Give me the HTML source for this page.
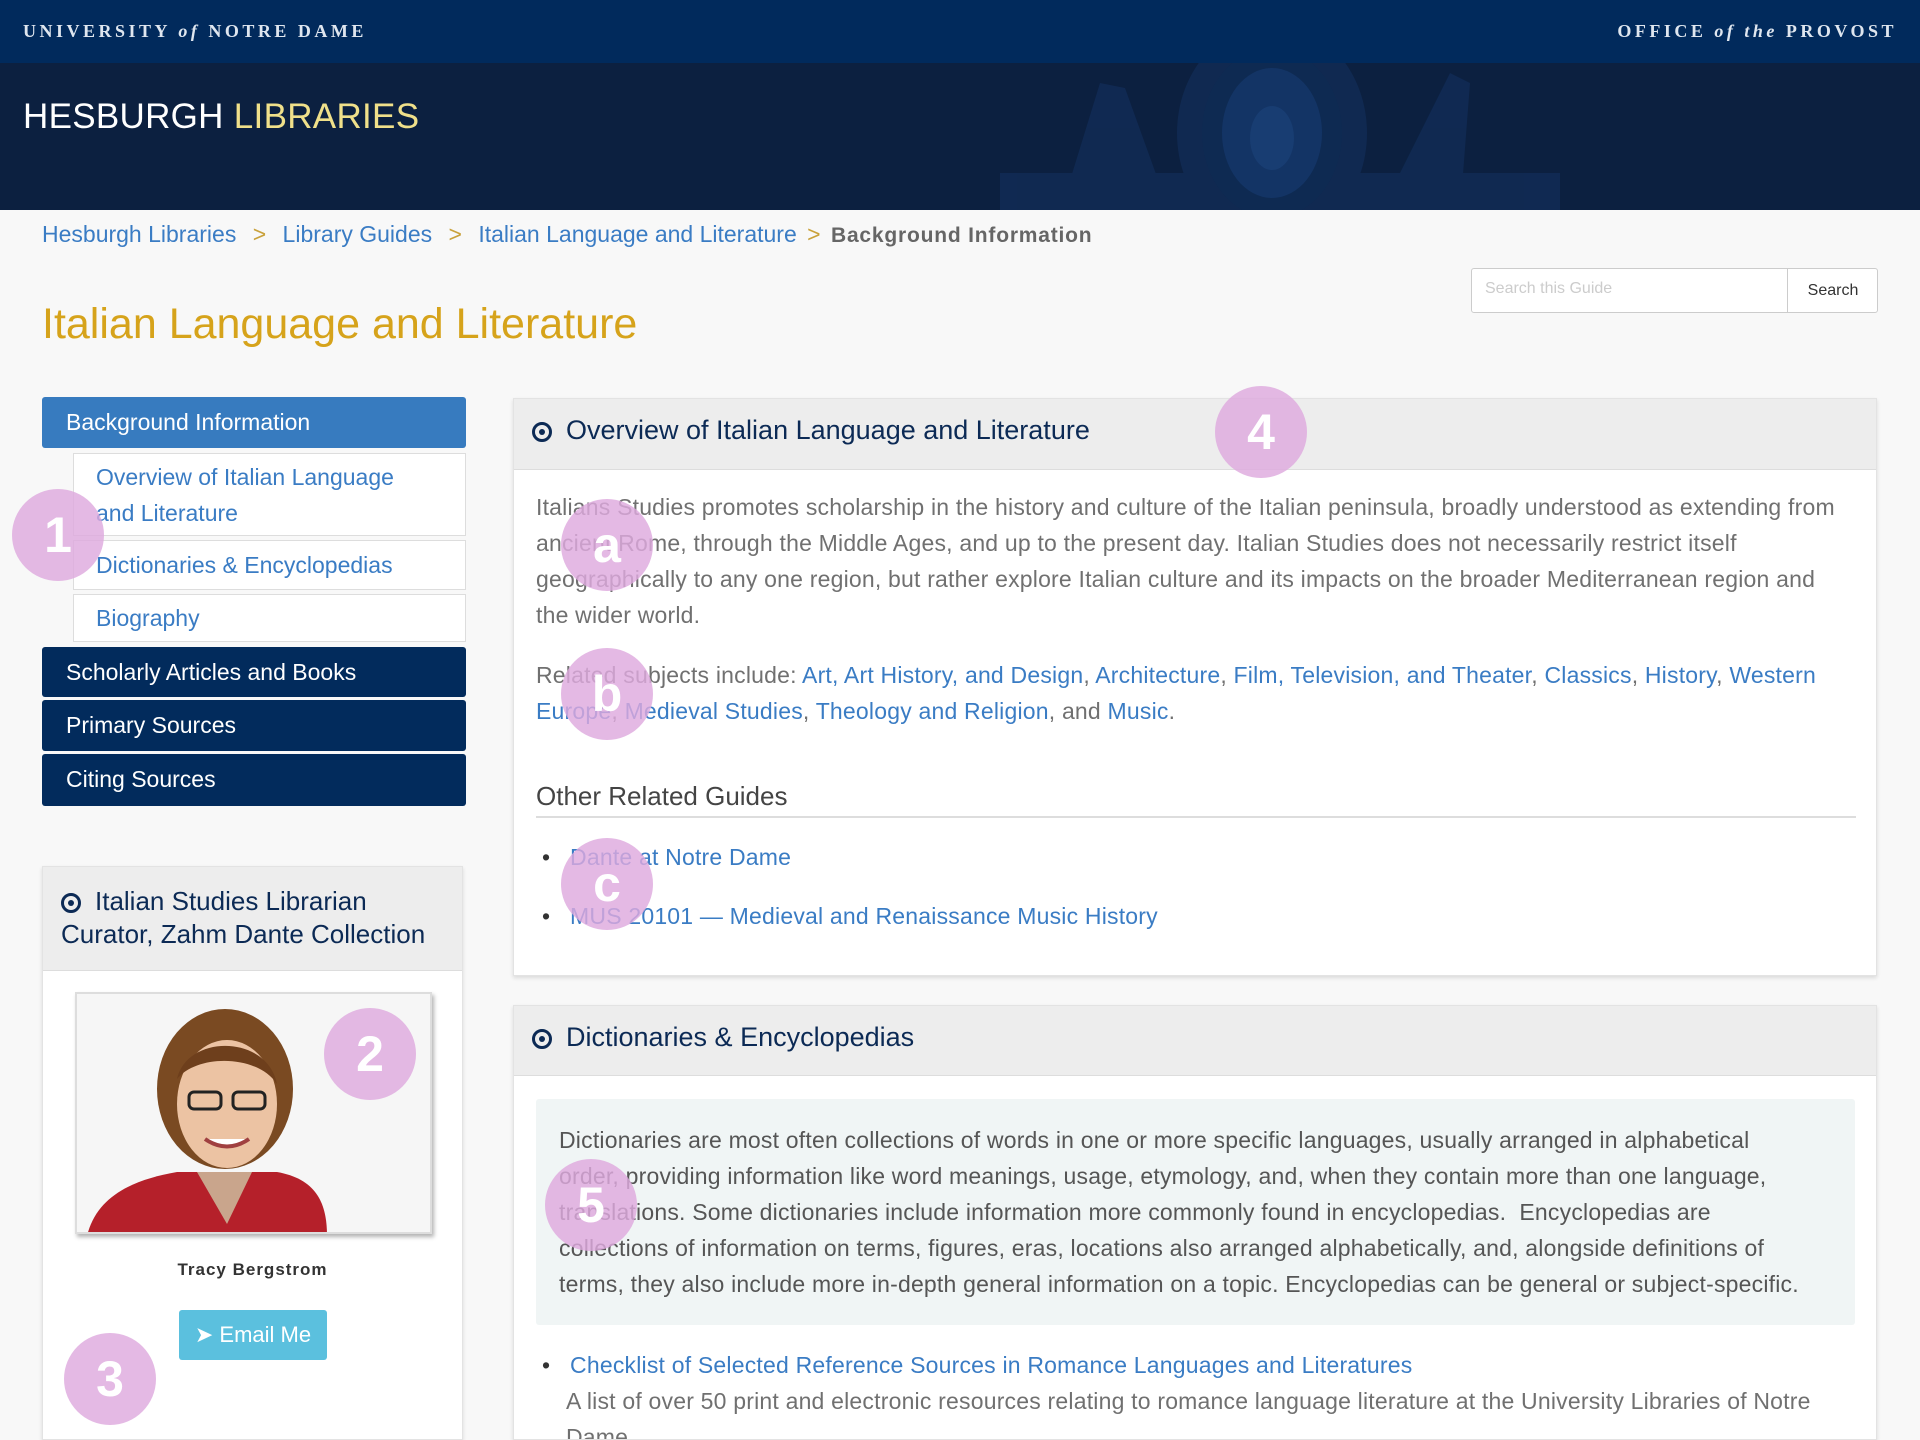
<!DOCTYPE html>
<html><head><meta charset="utf-8"><style>
*{margin:0;padding:0;box-sizing:border-box}
html,body{width:1920px;height:1440px;overflow:hidden}
body{background:#f8f8f8;font-family:"Liberation Sans",Arial,sans-serif;position:relative}
.abs{position:absolute}
a{color:#3a7cc4;text-decoration:none}
.top{left:0;top:0;width:1920px;height:63px;background:#012a5c}
.ban{left:0;top:63px;width:1920px;height:147px;background:#0c2040;overflow:hidden}
.serif{font-family:"Liberation Serif",serif;color:#dfe6ef;font-size:18px;letter-spacing:3.5px;top:21px;font-weight:bold}
.nav{left:42px;width:424px;color:#fff;font-size:23px;padding-left:24px;border-radius:3px;line-height:50px}
.sub{left:73px;width:393px;background:#fff;border:1px solid #ddd;font-size:23px;padding-left:22px;color:#3a7cc4}
.panel{background:#fff;border:1px solid #e3e3e3;box-shadow:0 2px 4px rgba(0,0,0,.12);overflow:hidden}
.ph{background:#ededed;border-bottom:1px solid #ddd}
.txt{font-size:23px;color:#707070;white-space:nowrap;line-height:36px;letter-spacing:.2px}
.circ{width:92px;height:92px;border-radius:50%;background:rgba(222,170,222,.82);color:#fff;font-weight:bold;font-size:50px;text-align:center;line-height:92px}
.eye{display:inline-block;width:20px;height:20px;border:3px solid #0c2a55;border-radius:50%;position:relative;vertical-align:middle;margin-right:14px}
.eye:after{content:"";position:absolute;left:4px;top:4px;width:6px;height:6px;border-radius:50%;background:#0c2a55}
</style></head><body>
<div class="abs top"></div>
<div class="abs serif" style="left:23px">UNIVERSITY <i>of</i> NOTRE DAME</div>
<div class="abs serif" style="right:23px">OFFICE <i>of the</i> PROVOST</div>
<div class="abs ban">
<svg width="1920" height="147" style="position:absolute;left:0;top:0">
<g fill="#112c56" opacity=".8">
<ellipse cx="1272" cy="70" rx="95" ry="110"/>
<path d="M1060 150 L1100 20 L1125 25 L1170 150Z"/>
<path d="M1380 150 L1450 10 L1470 20 L1460 150Z"/>
<rect x="1000" y="110" width="560" height="40"/>
</g>
<ellipse cx="1272" cy="70" rx="70" ry="85" fill="#0e2a52"/>
<ellipse cx="1272" cy="70" rx="50" ry="65" fill="#133465"/>
<ellipse cx="1272" cy="75" rx="22" ry="32" fill="#183d72"/>
</svg>
</div>
<div class="abs" style="left:23px;top:97px;font-size:35px;color:#fff;letter-spacing:.3px">HESBURGH <span style="color:#f0e08a">LIBRARIES</span></div>

<div class="abs" style="left:42px;top:221px;font-size:23px;color:#3a7cc4;white-space:nowrap">Hesburgh Libraries <span style="color:#c9a13a;margin:0 10px">&gt;</span> Library Guides <span style="color:#c9a13a;margin:0 10px">&gt;</span> Italian Language and Literature <span style="color:#c9a13a;margin:0 4px">&gt;</span> <span style="color:#666;font-weight:bold;font-size:21px;letter-spacing:.8px">Background Information</span></div>

<div class="abs" style="left:1471px;top:268px;width:407px;height:45px;border:1px solid #ccc;background:#fff;border-radius:3px"></div>
<div class="abs" style="left:1485px;top:280px;font-size:16px;color:#ccc">Search this Guide</div>
<div class="abs" style="left:1787px;top:268px;width:91px;height:45px;border-left:1px solid #ccc;font-size:16px;color:#333;text-align:center;line-height:45px">Search</div>

<div class="abs" style="left:42px;top:300px;font-size:43px;color:#d6a31b">Italian Language and Literature</div>

<div class="abs nav" style="top:397px;height:51px;background:#377bbf">Background Information</div>
<div class="abs sub" style="top:453px;height:83px;line-height:36px;padding-top:5px">Overview of Italian Language<br>and Literature</div>
<div class="abs sub" style="top:540px;height:50px;line-height:48px">Dictionaries &amp; Encyclopedias</div>
<div class="abs sub" style="top:594px;height:48px;line-height:46px">Biography</div>
<div class="abs nav" style="top:647px;height:50px;background:#022b5c">Scholarly Articles and Books</div>
<div class="abs nav" style="top:700px;height:51px;background:#022b5c">Primary Sources</div>
<div class="abs nav" style="top:754px;height:52px;background:#022b5c">Citing Sources</div>

<div class="abs panel" style="left:42px;top:866px;width:421px;height:574px">
<div class="ph" style="height:104px;padding:18px 0 0 18px;font-size:26px;color:#0c2a55;line-height:33px"><span class="eye"></span>Italian Studies Librarian<br>Curator, Zahm Dante Collection</div>
</div>
<div class="abs" style="left:75px;top:992px;width:357px;height:242px;background:#fff;border:2px solid #ddd;box-shadow:2px 3px 4px rgba(0,0,0,.3);overflow:hidden">
<svg width="357" height="242">
<rect width="357" height="242" fill="#f6f6f6"/>
<path d="M10 242 C20 200 60 185 100 178 L200 178 C240 185 250 210 250 242Z" fill="#b5202a"/>
<path d="M120 178 L150 230 L175 178Z" fill="#c9a58c"/>
<ellipse cx="148" cy="95" rx="68" ry="80" fill="#7a4a22"/>
<ellipse cx="150" cy="110" rx="50" ry="64" fill="#ecc3a3"/>
<path d="M100 85 C110 40 190 40 200 90 C180 60 120 60 100 85Z" fill="#6e3f1c"/>
<rect x="112" y="98" width="32" height="17" rx="5" fill="none" stroke="#222" stroke-width="3"/>
<rect x="156" y="98" width="32" height="17" rx="5" fill="none" stroke="#222" stroke-width="3"/>
<path d="M128 145 Q150 160 172 145" stroke="#a04040" stroke-width="4" fill="#fff"/>
</svg>
</div>
<div class="abs" style="left:42px;top:1260px;width:421px;text-align:center;font-size:17px;font-weight:bold;color:#333;letter-spacing:1px">Tracy Bergstrom</div>
<div class="abs" style="left:179px;top:1310px;width:148px;height:50px;background:#5bc0de;border-radius:3px;color:#fff;font-size:22px;line-height:50px;text-align:center">&#10148; Email Me</div>

<div class="abs panel" style="left:513px;top:398px;width:1364px;height:578px">
<div class="ph" style="height:71px;padding:16px 0 0 18px;font-size:27px;color:#0c2a55"><span class="eye"></span>Overview of Italian Language and Literature</div>
<div class="abs txt" style="left:22px;top:90px">Italians Studies promotes scholarship in the history and culture of the Italian peninsula, broadly understood as extending from<br>ancient Rome, through the Middle Ages, and up to the present day. Italian Studies does not necessarily restrict itself<br>geographically to any one region, but rather explore Italian culture and its impacts on the broader Mediterranean region and<br>the wider world.</div>
<div class="abs txt" style="left:22px;top:258px">Related subjects include: <a>Art, Art History, and Design</a>, <a>Architecture</a>, <a>Film, Television, and Theater</a>, <a>Classics</a>, <a>History</a>, <a>Western</a><br><a>Europe</a>, <a>Medieval Studies</a>, <a>Theology and Religion</a>, and <a>Music</a>.</div>
<div class="abs" style="left:22px;top:382px;width:1320px;border-bottom:2px solid #ddd;font-size:26px;color:#444;padding-bottom:4px">Other Related Guides</div>
<div class="abs txt" style="left:28px;top:440px;color:#333">•&nbsp;&nbsp;&nbsp;<a>Dante at Notre Dame</a></div>
<div class="abs txt" style="left:28px;top:499px;color:#333">•&nbsp;&nbsp;&nbsp;<a>MUS 20101 — Medieval and Renaissance Music History</a></div>
</div>

<div class="abs panel" style="left:513px;top:1005px;width:1364px;height:435px">
<div class="ph" style="height:70px;padding:16px 0 0 18px;font-size:27px;color:#0c2a55"><span class="eye"></span>Dictionaries &amp; Encyclopedias</div>
<div class="abs" style="left:22px;top:93px;width:1319px;height:226px;background:#f0f5f5;border-radius:3px"></div>
<div class="abs txt" style="left:45px;top:116px;color:#555">Dictionaries are most often collections of words in one or more specific languages, usually arranged in alphabetical<br>order, providing information like word meanings, usage, etymology, and, when they contain more than one language,<br>translations. Some dictionaries include information more commonly found in encyclopedias.&nbsp; Encyclopedias are<br>collections of information on terms, figures, eras, locations also arranged alphabetically, and, alongside definitions of<br>terms, they also include more in-depth general information on a topic. Encyclopedias can be general or subject-specific.</div>
<div class="abs txt" style="left:28px;top:341px;color:#333">•&nbsp;&nbsp;&nbsp;<a>Checklist of Selected Reference Sources in Romance Languages and Literatures</a></div>
<div class="abs txt" style="left:52px;top:377px">A list of over 50 print and electronic resources relating to romance language literature at the University Libraries of Notre<br>Dame</div>
</div>

<div class="abs circ" style="left:12px;top:489px">1</div>
<div class="abs circ" style="left:324px;top:1008px">2</div>
<div class="abs circ" style="left:64px;top:1333px">3</div>
<div class="abs circ" style="left:1215px;top:386px">4</div>
<div class="abs circ" style="left:561px;top:499px">a</div>
<div class="abs circ" style="left:561px;top:648px">b</div>
<div class="abs circ" style="left:561px;top:838px">c</div>
<div class="abs circ" style="left:545px;top:1159px">5</div>
</body></html>
